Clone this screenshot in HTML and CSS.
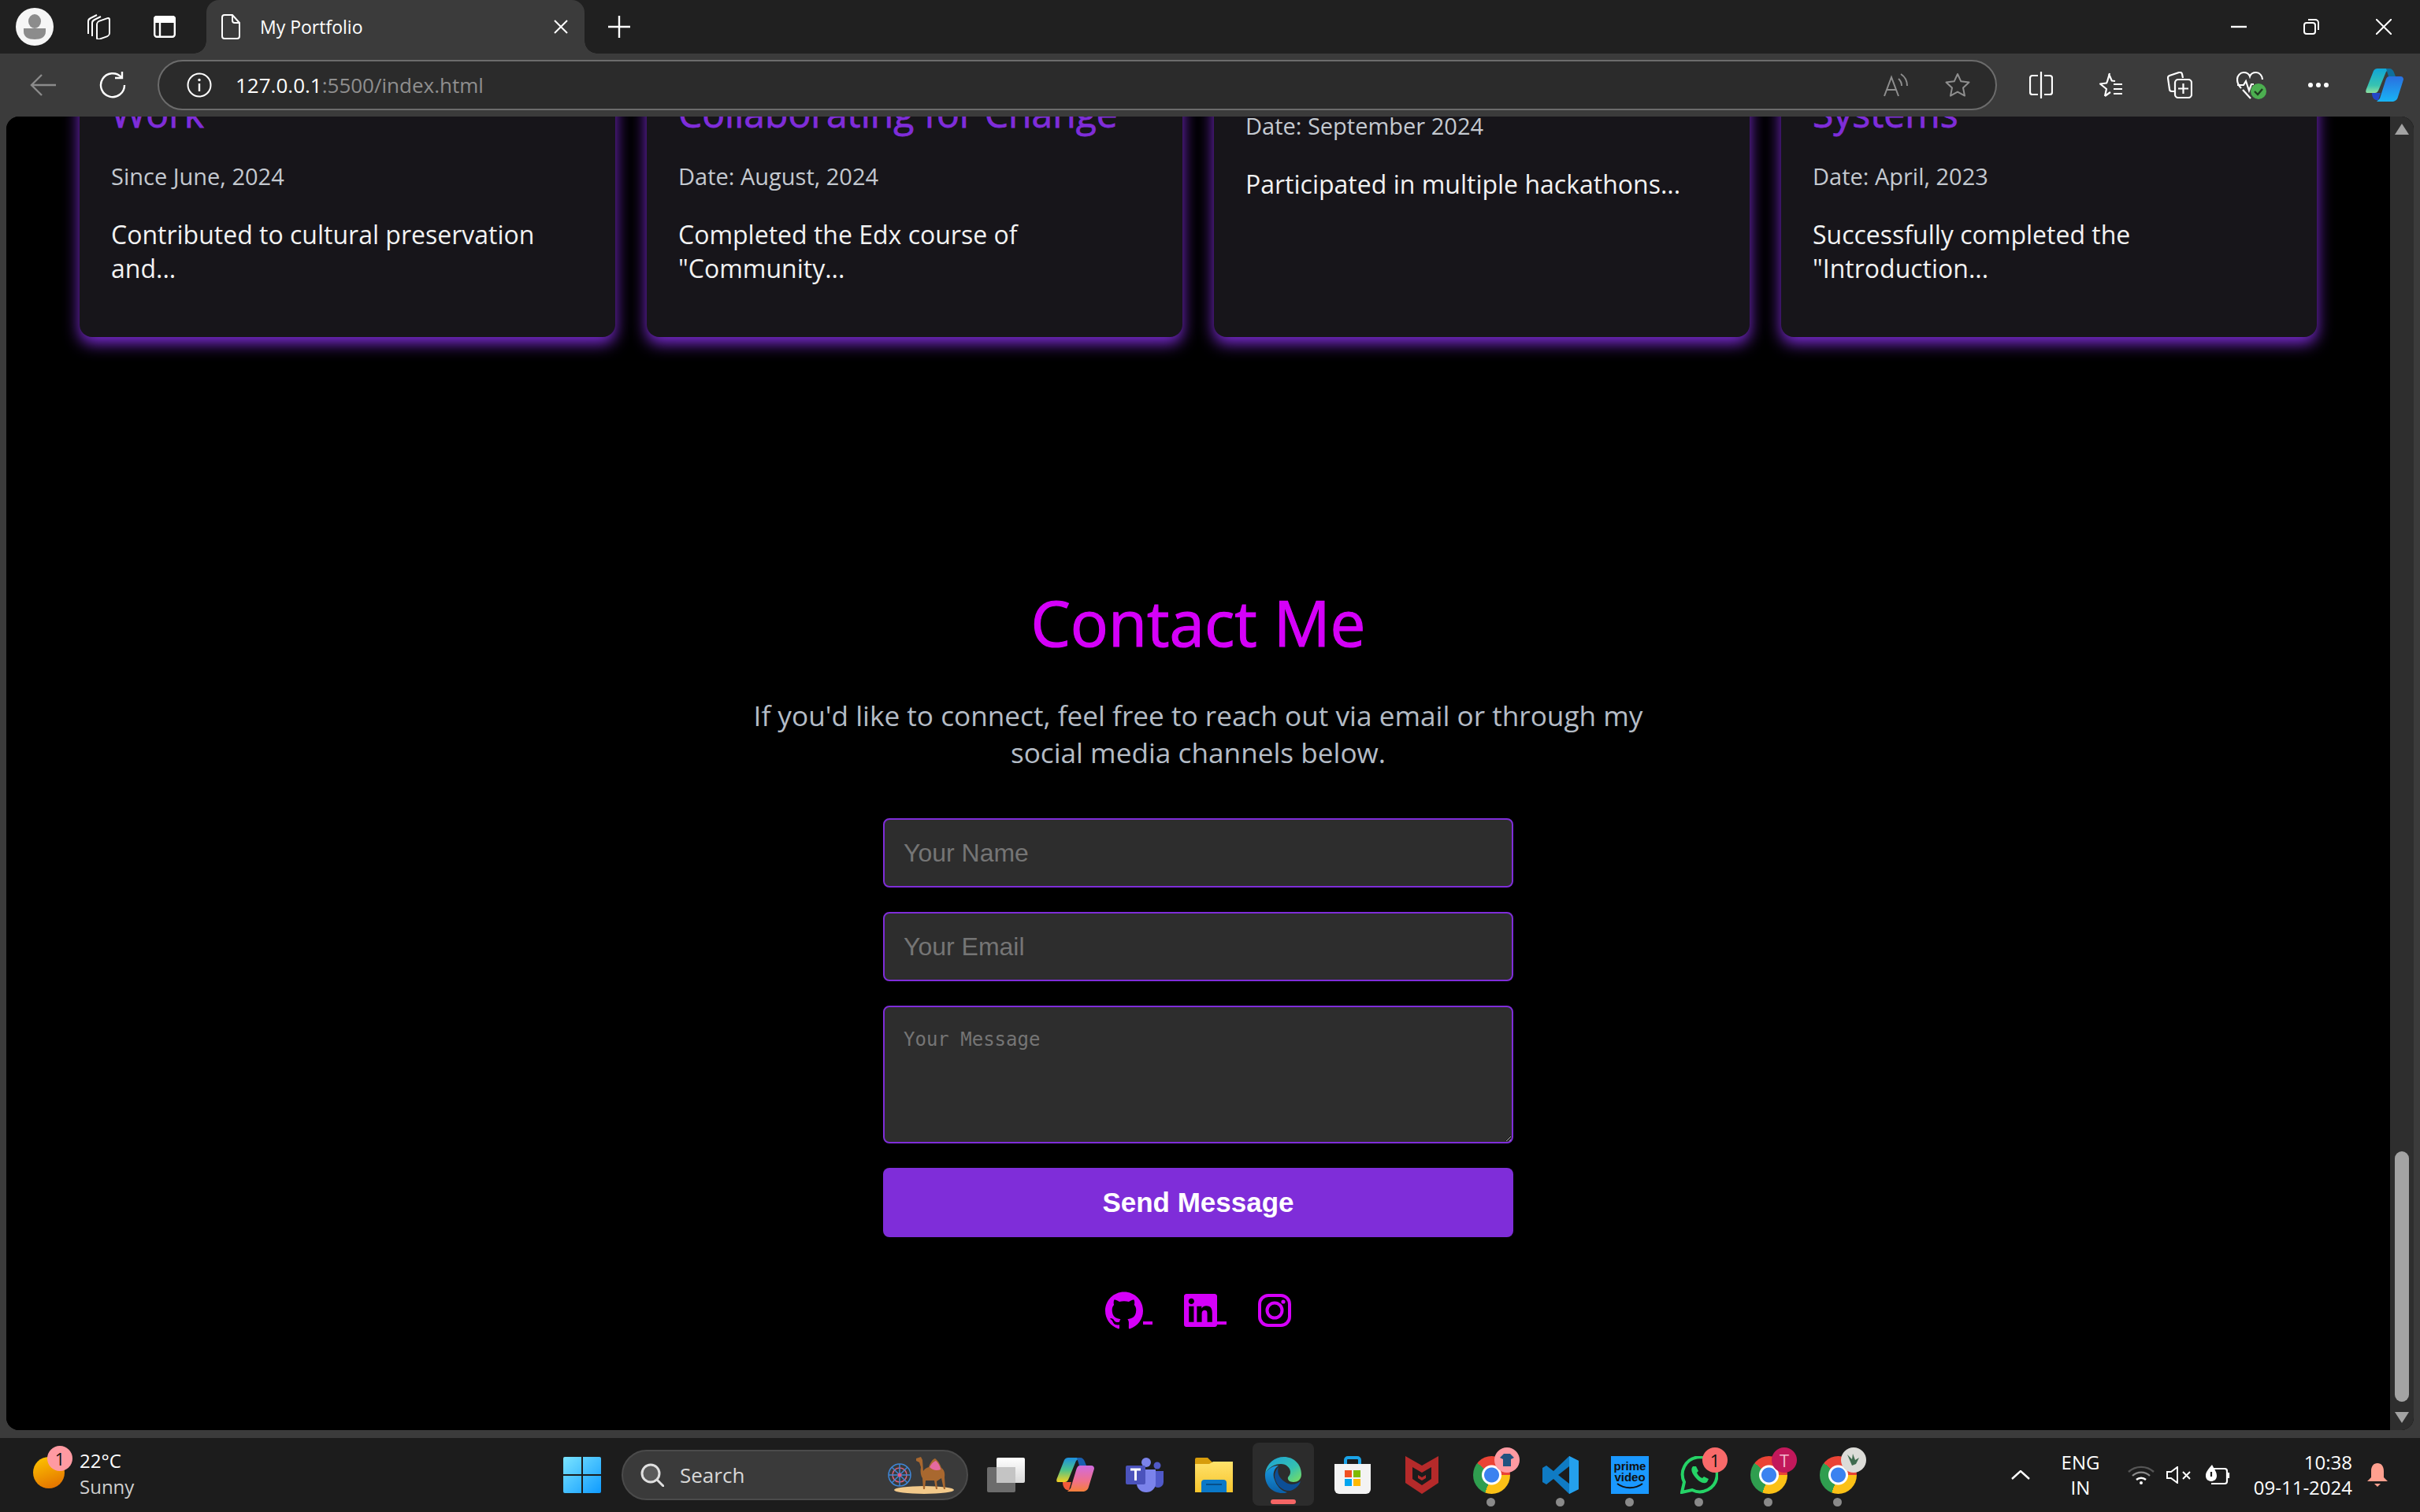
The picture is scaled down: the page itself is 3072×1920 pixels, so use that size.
FILE: index.html
```html
<!DOCTYPE html>
<html lang="en">
<head>
  <meta charset="UTF-8" />
  <title>My Portfolio</title>
  <link rel="stylesheet" href="styles.css">
</head>
<body>
  <!-- tab strip -->
  <div class="tabstrip">
    <svg class="profile" width="48" height="48" viewBox="0 0 48 48"><circle cx="24" cy="24" r="24" fill="#f6f6f6"/><ellipse cx="24" cy="17" rx="8" ry="9" fill="#8c8c8c"/><path d="M10 26h28v4c0 7-6 10-14 10s-14-3-14-10z" fill="#8c8c8c"/></svg>
    <svg class="workspaces" width="32" height="32" viewBox="0 0 32 32" fill="none" stroke="#fff" stroke-width="2"><path d="M3 25V9c0-2 1-3 3-4l8-4"/><path d="M8 28V11c0-2 1-3 3-4l8-4"/><rect x="14" y="7" width="16" height="23" rx="3" transform="skewY(-20) translate(0 8)"/></svg>
    <svg class="vtabs" width="28" height="28" viewBox="0 0 28 28"><path d="M4 0h20a4 4 0 0 1 4 4v5H0V4a4 4 0 0 1 4-4z" fill="#fff"/><rect x="1.200" y="1.200" width="25.600" height="25.600" rx="3" fill="none" stroke="#fff" stroke-width="2.400"/><path d="M8 8v19" stroke="#fff" stroke-width="2.400"/></svg>
    <div class="tab">
      <svg width="24" height="32" viewBox="0 0 24 32" fill="none" stroke="#fff" stroke-width="2"><path d="M4 1h10l9 10v17a3 3 0 0 1-3 3H4a3 3 0 0 1-3-3V4a3 3 0 0 1 3-3z"/><path d="M14 1v7a3 3 0 0 0 3 3h6"/></svg>
      <span class="tab-title">My Portfolio</span>
      <svg class="tab-close" width="18" height="18" viewBox="0 0 18 18" stroke="#fff" stroke-width="2"><path d="M1 1l16 16M17 1L1 17"/></svg>
    </div>
    <svg class="newtab" width="28" height="28" viewBox="0 0 28 28" stroke="#fff" stroke-width="2.400"><path d="M14 0v28M0 14h28"/></svg>
    <div class="winctrl">
      <svg width="20" height="4" viewBox="0 0 20 4"><path d="M0 2h20" stroke="#fff" stroke-width="2.400"/></svg>
      <svg width="20" height="20" viewBox="0 0 20 20" fill="none" stroke="#fff" stroke-width="2"><rect x="1" y="5" width="14" height="14" rx="3"/><path d="M6 1h9a4 4 0 0 1 4 4v9"/></svg>
      <svg width="20" height="20" viewBox="0 0 20 20" stroke="#fff" stroke-width="2"><path d="M0 0l20 20M20 0L0 20"/></svg>
    </div>
  </div>

  <!-- address bar row -->
  <div class="toolbar">
    <div class="slot"><svg width="34" height="28" viewBox="0 0 34 28" fill="none" stroke="#8b8b8b" stroke-width="2.400"><path d="M33 14H2M15 1L2 14l13 13"/></svg></div>
    <div class="slot"><svg width="34" height="34" viewBox="0 0 34 34" fill="none" stroke="#fff" stroke-width="2.400"><path d="M28 7a15 15 0 1 0 4 10"/><path d="M29 0v8h-9"/></svg></div>
    <div class="address">
      <svg width="32" height="32" viewBox="0 0 32 32" fill="none" stroke="#fff" stroke-width="2"><circle cx="16" cy="16" r="14.500"/><path d="M16 14v10" stroke-width="2.400"/><circle cx="16" cy="9.500" r="1.700" fill="#fff" stroke="none"/></svg>
      <div class="url"><span class="url-host">127.0.0.1</span>:5500/index.html</div>
      <svg class="read-aloud" width="32" height="30" viewBox="0 0 32 30" fill="none" stroke="#8f8f8f" stroke-width="2"><path d="M1 29L10 5l9 24M4 21h12"/><path d="M19 7a12 12 0 0 1 4 9M22 1a18 18 0 0 1 8 15"/></svg>
      <svg class="star" width="32" height="32" viewBox="0 0 32 32" fill="none" stroke="#8f8f8f" stroke-width="2" stroke-linejoin="round"><path d="M16 2l4.300 9.300 10.200 1.200-7.500 7 2 10.100-9-5-9 5 2-10.100-7.500-7 10.200-1.200z"/></svg>
    </div>
    <div class="slot first-tool"><svg width="30" height="34" viewBox="0 0 30 34" fill="none" stroke="#fff" stroke-width="2.200"><path d="M15 0v34"/><path d="M11 5H4a3 3 0 0 0-3 3v18a3 3 0 0 0 3 3h7M19 5h7a3 3 0 0 1 3 3v18a3 3 0 0 1-3 3h-7"/></svg></div>
    <div class="slot"><svg width="32" height="32" viewBox="0 0 32 32" fill="none" stroke="#fff" stroke-width="2.200" stroke-linejoin="round"><path d="M14 2l3.800 8.500 4.200.5M9 30l2-9-8-6.500 8-1 1-2 3-10.500M9 30l7-5"/><path d="M20 15h11M20 21h11M20 27h11"/></svg></div>
    <div class="slot"><svg width="32" height="34" viewBox="0 0 32 34" fill="none" stroke="#fff" stroke-width="2.200"><path d="M9 25H6a3 3 0 0 1-3-3L1 8a3 3 0 0 1 2-3l12-4a3 3 0 0 1 4 2l1 5"/><rect x="10" y="10" width="21" height="23" rx="4"/><path d="M20.500 15v13M14 21.500h13"/></svg></div>
    <div class="slot health-slot"><svg width="38" height="36" viewBox="0 0 38 36" fill="none" stroke="#fff" stroke-width="2.200"><path d="M6 22C3 19 1 16 1 11c0-5 4-9 8-9 4 0 7 2 8 5 1-3 4-5 8-5 4 0 8 4 8 9"/><path d="M1 18h8l3-5 4 12 3-8h3M8 24l10 11"/><circle cx="28" cy="26" r="10" fill="#4caf50" stroke="none"/><path d="M23 26l4 4 6-7" stroke="#1f3d20" stroke-width="2.400"/></svg></div>
    <div class="slot dots-slot"><span class="dot"></span><span class="dot"></span><span class="dot"></span></div>
    <div class="copilot"><svg width="48" height="42" viewBox="0 0 48 42"><defs><linearGradient id="cpA" x1="0" y1="0" x2="0" y2="1"><stop offset="0" stop-color="#0fa5d8"/><stop offset=".7" stop-color="#38c4b0"/><stop offset="1" stop-color="#8fe0a0"/></linearGradient><linearGradient id="cpB" x1="0" y1="0" x2="0" y2="1"><stop offset="0" stop-color="#2a6fe0"/><stop offset="1" stop-color="#18b4f5"/></linearGradient></defs><path d="M10 3c1-2 3-3 5-3h16l-5 4-9 22c-1 2-2 5-5 5H2C0 31 0 29 .5 27z" fill="url(#cpA)"/><path d="M26 0h4c3 0 5 2 6 5l2 5h-9z" fill="#0f6f9c"/><path d="M30 10h14c3 0 4 2 4 4l-7 22c-1 4-4 6-8 6H14l4-4 7-22c1-3 2-6 5-6z" fill="url(#cpB)"/><path d="M8 31h11l-3 9c-5 1-8-3-8-9z" fill="#2447c8"/></svg></div>
  </div>

  <!-- page area inside the window -->
  <div class="frame">
    <div class="viewport">
      <main class="page">
        <section class="cards">
          <article class="card">
            <h3 class="card-title">Work</h3>
            <p class="card-date">Since June, 2024</p>
            <p class="card-text">Contributed to cultural preservation and...</p>
          </article>
          <article class="card">
            <h3 class="card-title">Collaborating for Change</h3>
            <p class="card-date">Date: August, 2024</p>
            <p class="card-text">Completed the Edx course of "Community...</p>
          </article>
          <article class="card">
            <p class="card-date">Date: September 2024</p>
            <p class="card-text">Participated in multiple hackathons...</p>
          </article>
          <article class="card">
            <h3 class="card-title">Systems</h3>
            <p class="card-date">Date: April, 2023</p>
            <p class="card-text">Successfully completed the "Introduction...</p>
          </article>
        </section>

        <section class="contact">
          <h2 class="contact-title">Contact Me</h2>
          <p class="contact-text">If you'd like to connect, feel free to reach out via email or through my social media channels below.</p>
          <form class="contact-form">
            <input class="field" type="text" placeholder="Your Name">
            <input class="field" type="email" placeholder="Your Email">
            <textarea class="field field-area" placeholder="Your Message"></textarea>
            <button class="send" type="button">Send Message</button>
          </form>
          <div class="socials"><a class="social" href="#"><svg class="icon-gh" viewBox="0 0 24 24" fill="currentColor"><path d="M12 .297c-6.630 0-12 5.373-12 12 0 5.303 3.438 9.800 8.205 11.385.6.113.820-.258.820-.577 0-.285-.010-1.040-.015-2.040-3.338.724-4.042-1.610-4.042-1.610C4.422 18.070 3.633 17.700 3.633 17.700c-1.087-.744.084-.729.084-.729 1.205.084 1.838 1.236 1.838 1.236 1.070 1.835 2.809 1.305 3.495.998.108-.776.417-1.305.760-1.605-2.665-.300-5.466-1.332-5.466-5.930 0-1.310.465-2.380 1.235-3.220-.135-.303-.540-1.523.105-3.176 0 0 1.005-.322 3.300 1.230.960-.267 1.980-.399 3-.405 1.020.006 2.040.138 3 .405 2.280-1.552 3.285-1.230 3.285-1.230.645 1.653.240 2.873.120 3.176.765.840 1.230 1.910 1.230 3.220 0 4.610-2.805 5.625-5.475 5.920.420.360.810 1.096.810 2.220 0 1.606-.015 2.896-.015 3.286 0 .315.210.690.825.570C20.565 22.092 24 17.592 24 12.297c0-6.627-5.373-12-12-12"/></svg> </a><a class="social" href="#"><svg class="icon-sq" viewBox="0 0 24 24" fill="currentColor"><path d="M20.447 20.452h-3.554v-5.569c0-1.328-.027-3.037-1.852-3.037-1.853 0-2.136 1.445-2.136 2.939v5.667H9.351V9h3.414v1.561h.046c.477-.9 1.637-1.850 3.370-1.850 3.601 0 4.267 2.370 4.267 5.455v6.286zM5.337 7.433c-1.144 0-2.063-.926-2.063-2.065 0-1.138.920-2.063 2.063-2.063 1.140 0 2.064.925 2.064 2.063 0 1.139-.925 2.065-2.064 2.065zm1.782 13.019H3.555V9h3.564v11.452zM22.225 0H1.771C.792 0 0 .774 0 1.729v20.542C0 23.227.792 24 1.771 24h20.451C23.200 24 24 23.227 24 22.271V1.729C24 .774 23.200 0 22.222 0h.003z"/></svg> </a><a class="social" href="#"><svg class="icon-sq" viewBox="0 0 42 42" fill="none" stroke="currentColor" stroke-width="4"><rect x="2" y="2" width="38" height="38" rx="11"/><circle cx="21" cy="21" r="9.500"/><circle cx="32" cy="10" r="2.600" fill="currentColor" stroke="none"/></svg></a></div>
        </section>
      </main>
      <div class="scrollbar">
        <span class="arrow arrow-up"></span>
        <span class="thumb"></span>
        <span class="arrow arrow-down"></span>
      </div>
    </div>
  </div>

  <!-- windows taskbar -->
  <footer class="taskbar">
    <div class="weather">
      <span class="sun"></span>
      <span class="badge badge-pink">1</span>
      <div class="weather-text">
        <div class="temp">22°C</div>
        <div class="cond">Sunny</div>
      </div>
    </div>
    <div class="task">
      <svg width="48" height="46" viewBox="0 0 48 46"><defs><linearGradient id="winG" x1="0" y1="0" x2="1" y2="1"><stop offset="0" stop-color="#7ae4ff"/><stop offset="1" stop-color="#0f9bff"/></linearGradient></defs><path d="M2 0h21v22H0V2a2 2 0 0 1 2-2zM25 0h21a2 2 0 0 1 2 2v20H25zM0 24h23v22H2a2 2 0 0 1-2-2zM25 24h23v20a2 2 0 0 1-2 2H25z" fill="url(#winG)"/></svg>
    </div>
    <div class="search">
      <svg width="30" height="30" viewBox="0 0 30 30" fill="none" stroke="#e0e0e0" stroke-width="3"><circle cx="13" cy="13" r="11" fill="#5a5a5a"/><path d="M21 21l8 8" stroke-linecap="round"/></svg>
      <span class="search-label">Search</span>
      <svg class="camel" width="84" height="48" viewBox="0 0 84 48"><ellipse cx="46" cy="43" rx="38" ry="5" fill="#f2c98a"/><g fill="none" stroke="#3f86d6" stroke-width="1.500"><circle cx="15" cy="24" r="14"/><circle cx="15" cy="24" r="9" stroke="#d9607f"/><path d="M15 10v28M1 24h28M5 14l20 20M25 14L5 34"/></g><circle cx="15" cy="24" r="2.500" fill="#e2567f"/><path d="M36 3l6-2 2 4 1 14c2-3 4-4 7-5 2-6 5-10 8-11 3 2 6 6 8 12 3 2 5 6 4 12l1 15h-2l-3-14-6 4 1 10h-2l-2-11H48l-1 11h-2l-1-14c-2-3-3-8-2-14L40 8l-4-2z" fill="#a9682f"/><path d="M53 14c3-5 5-7 8-8 2 2 5 5 6 11-5 2-10 1-14-3z" fill="#e56aa0"/></svg>
    </div>
    <div class="task task-first">
      <svg width="48" height="44" viewBox="0 0 48 44"><defs><linearGradient id="tvG" x1="0" y1="0" x2="0" y2="1"><stop offset="0" stop-color="#ffffff"/><stop offset="1" stop-color="#d8d8d8"/></linearGradient></defs><rect x="12" width="36" height="32" rx="2" fill="url(#tvG)"/><rect y="12" width="36" height="32" rx="2" fill="#7a7a7a" fill-opacity=".85"/><rect x="12" y="12" width="24" height="20" fill="#c4c4c4"/></svg>
    </div>
    <div class="task">
      <svg width="48" height="44" viewBox="0 0 48 44"><defs><linearGradient id="cp2A" x1="0" y1="0" x2="0" y2="1"><stop offset="0" stop-color="#1c8fe0"/><stop offset=".5" stop-color="#4cc38a"/><stop offset="1" stop-color="#f5d020"/></linearGradient><linearGradient id="cp2B" x1="0" y1="0" x2="0" y2="1"><stop offset="0" stop-color="#d06be0"/><stop offset=".6" stop-color="#f0708a"/><stop offset="1" stop-color="#f5803a"/></linearGradient></defs><path d="M10 3c1-2 3-3 5-3h15l-5 4-9 22c-1 2-2 5-5 5H2C0 31 0 29 .5 27z" fill="url(#cp2A)"/><path d="M26 0h4c3 0 5 2 6 5l2 5h-9z" fill="#1a5fb0"/><path d="M30 10h14c3 0 4 2 4 4l-7 23c-1 4-4 6-8 6H14l4-4 7-23c1-3 2-6 5-6z" fill="url(#cp2B)"/><path d="M8 31h11l-3 10c-5 1-8-4-8-10z" fill="#f25a3a"/></svg>
    </div>
    <div class="task">
      <svg width="48" height="44" viewBox="0 0 48 44"><circle cx="26" cy="6" r="6" fill="#7b83eb"/><circle cx="40" cy="10" r="4.500" fill="#5059c9"/><path d="M34 17h14v14a7 7 0 0 1-14 0z" fill="#5059c9"/><path d="M14 15h24v18a12 11 0 0 1-24 0z" fill="#7b83eb"/><rect y="10" width="25" height="24" rx="2" fill="#4b53bc"/><path d="M6 15h13M12.500 15v14" stroke="#fff" stroke-width="3"/></svg>
    </div>
    <div class="task">
      <svg width="48" height="44" viewBox="0 0 48 44"><defs><linearGradient id="fdG" x1="0" y1="0" x2="0" y2="1"><stop offset="0" stop-color="#ffe26b"/><stop offset="1" stop-color="#f7c52c"/></linearGradient></defs><path d="M0 2a2 2 0 0 1 2-2h14l6 6h26v6H0z" fill="#d79c0b"/><path d="M0 8h18l5-3h25v39H0z" fill="url(#fdG)"/><path d="M8 44V32a4 4 0 0 1 4-4h24a4 4 0 0 1 4 4v12z" fill="#0a78c8"/><path d="M14 34h20" stroke="#064f8a" stroke-width="2"/></svg>
    </div>
    <div class="task task-active">
      <svg width="48" height="48" viewBox="0 0 48 48"><defs><linearGradient id="egA" x1="0" y1="0" x2="1" y2="1"><stop offset="0" stop-color="#1a9fd8"/><stop offset=".6" stop-color="#35c1b0"/><stop offset="1" stop-color="#7fe05a"/></linearGradient><linearGradient id="egB" x1="0" y1="0" x2="0" y2="1"><stop offset="0" stop-color="#1a9be0"/><stop offset="1" stop-color="#0b5fa8"/></linearGradient></defs><path d="M1 22C3 9 13 1 25 1c12 0 22 9 22 22 0 7-5 10-10 10-5 0-8-3-7-6 1-2 3-3 3-7 0-5-5-10-12-10C13 10 6 14 1 22z" fill="url(#egA)"/><path d="M1 22C5 16 11 12 18 12c-6 4-8 11-5 18 2 7 8 14 16 16-2 1-4 1-6 1C10 47 0 37 1 22z" fill="url(#egB)"/><path d="M18 14c-4 4-6 10-4 16 2 8 10 15 19 14 6-2 11-6 13-12-5 4-12 5-18 2-7-4-13-11-10-20z" fill="#0d4f96"/></svg>
      <span class="active-bar"></span>
    </div>
    <div class="task">
      <svg width="46" height="48" viewBox="0 0 46 48"><path d="M14 12V5a3 3 0 0 1 3-3h12a3 3 0 0 1 3 3v7" fill="none" stroke="#1aa3e8" stroke-width="4"/><path d="M0 10h46v32a6 6 0 0 1-6 6H6a6 6 0 0 1-6-6z" fill="#f3f3f3"/><rect x="13" y="18" width="9" height="9" fill="#f25022"/><rect x="24" y="18" width="9" height="9" fill="#7fba00"/><rect x="13" y="29" width="9" height="9" fill="#00a4ef"/><rect x="24" y="29" width="9" height="9" fill="#ffb900"/></svg>
    </div>
    <div class="task">
      <svg width="42" height="48" viewBox="0 0 42 48"><path d="M0 0l21 12L42 0v34L21 48 0 34z" fill="#b52a2a"/><path d="M9 14l12 7 12-7v15l-12 8-12-8z" fill="#1c1c1c"/><path d="M21 27l-5-3v4l5 3 5-3v-4z" fill="#b52a2a"/></svg>
    </div>
    <div class="task task-open">
      <span class="chrome"></span>
      <span class="badge badge-pink badge-app">
        <svg width="18" height="18" viewBox="0 0 18 18"><path d="M5 1h8l5 5-4 2v9H4V8L0 6z" fill="#21527f"/></svg>
      </span>
    </div>
    <div class="task task-open">
      <svg width="46" height="48" viewBox="0 0 46 48"><path d="M34 0l12 6v36l-12 6-20-19-9 7-5-3V15l5-3 9 7z" fill="#0f7bc4"/><path d="M34 0l12 6v36l-12 6z" fill="#24a0ed"/><path d="M34 13L20 24l14 11z" fill="#1c1c1c"/></svg>
    </div>
    <div class="task task-open">
      <div class="prime"><span>prime</span><span>video</span><svg width="34" height="10" viewBox="0 0 34 10" fill="none" stroke="#111" stroke-width="2"><path d="M1 1c9 7 23 7 32 0"/></svg></div>
    </div>
    <div class="task task-open">
      <svg width="48" height="48" viewBox="0 0 48 48"><path d="M2 46l3-13A22 22 0 1 1 15 43z" fill="none" stroke="#25d366" stroke-width="4"/><path d="M16 13c-3 3-2 8 3 14s11 9 15 6l2-4-6-3-2 2c-3-1-6-4-7-7l2-2-3-6z" fill="#25d366"/></svg>
      <span class="badge badge-red">1</span>
    </div>
    <div class="task task-open">
      <span class="chrome"></span>
      <span class="badge badge-berry">T</span>
    </div>
    <div class="task task-open">
      <span class="chrome"></span>
      <span class="badge badge-grey"><svg width="20" height="20" viewBox="0 0 20 20"><path d="M2 3l6 6 1-7 3 8 5-3-4 8-5 2z" fill="#3f6b4f"/></svg></span>
    </div>
    <div class="tray">
      <svg class="chevron" width="24" height="12" viewBox="0 0 24 12" fill="none" stroke="#fff" stroke-width="2.400"><path d="M1 11L12 1l11 10"/></svg>
      <div class="lang"><div>ENG</div><div>IN</div></div>
      <svg class="wifi" width="34" height="24" viewBox="0 0 34 24" fill="none" stroke="#555" stroke-width="2.400"><path d="M1 8a24 24 0 0 1 32 0"/><path d="M6 13a16 16 0 0 1 22 0" stroke="#8a8a8a"/><path d="M11 18a9 9 0 0 1 12 0" stroke="#fff"/><circle cx="17" cy="22" r="2" fill="#fff" stroke="none"/></svg>
      <svg class="vol" width="32" height="22" viewBox="0 0 32 22" fill="none" stroke="#fff" stroke-width="2"><path d="M1 7h5l8-6v20l-8-6H1z"/><path d="M21 7l9 9M30 7l-9 9"/></svg>
      <svg class="batt" width="32" height="28" viewBox="0 0 32 28" fill="none" stroke="#fff" stroke-width="2.200"><path d="M7 6h18a3 3 0 0 1 3 3v13a3 3 0 0 1-3 3H8M30 11v7"/><path d="M9 1c-5 6-8 9-8 14 0 5 4 7 7 7s7-2 7-7c0-5-3-8-6-14z" fill="#fff" stroke="none"/><path d="M8 10v6" stroke="#1c1c1c"/></svg>
      <div class="clock"><div>10:38</div><div>09-11-2024</div></div>
      <svg class="bell" width="28" height="30" viewBox="0 0 28 30"><path d="M14 0c5 0 8 4 8 10v8l5 5H1l5-5v-8c0-6 3-10 8-10z" fill="#ffa08f"/><path d="M10 26h8l-4 4z" fill="#ffa08f"/></svg>
    </div>
  </footer>
</body>
</html>
```

FILE: styles.css
```css
* {
  box-sizing: border-box;
}
html, body {
  margin: 0;
  height: 100%;
  overflow: hidden;
}
body {
  width: 3072px;
  height: 1920px;
  display: flex;
  flex-direction: column;
  background: #3b3b3b;
  font-family: "Open Sans", sans-serif;
  color: #fff;
}
svg {
  display: block;
  flex: none;
}

/* tab strip */
.tabstrip {
  height: 68px;
  flex: none;
  display: flex;
  align-items: center;
  background: #202020;
}
.profile {
  margin-left: 20px;
}
.workspaces {
  margin-left: 41px;
}
.vtabs {
  margin-left: 54px;
}
.tab {
  width: 480px;
  height: 68px;
  margin-left: 39px;
  padding: 0 21px 0 19px;
  display: flex;
  align-items: center;
  position: relative;
  background: #3b3b3b;
  border-radius: 16px 16px 0 0;
}
/* the curved feet of the active tab */
.tab::before,
.tab::after {
  content: "";
  position: absolute;
  bottom: 0;
  width: 16px;
  height: 16px;
}
.tab::before {
  left: -16px;
  background: radial-gradient(circle at 0 0, transparent 15.500px, #3b3b3b 16px);
}
.tab::after {
  right: -16px;
  background: radial-gradient(circle at 100% 0, transparent 15.500px, #3b3b3b 16px);
}
.tab-title {
  margin-left: 25px;
  font-size: 23px;
  flex: 1;
}
.newtab {
  margin-left: 30px;
}
.winctrl {
  margin-left: auto;
  margin-right: 36px;
  display: flex;
  align-items: center;
  gap: 72px;
}

/* toolbar */
.toolbar {
  height: 80px;
  flex: none;
  display: flex;
  align-items: center;
  padding-left: 11px;
  background: #3b3b3b;
}
.slot {
  width: 88px;
  height: 64px;
  flex: none;
  display: flex;
  align-items: center;
  justify-content: center;
}
.address {
  width: 2335px;
  height: 64px;
  margin-left: 13px;
  padding: 0 32px 0 35px;
  display: flex;
  align-items: center;
  flex: none;
  background: #2b2b2b;
  border: 2px solid #6c6c6c;
  border-radius: 32px;
}
.url {
  margin-left: 30px;
  font-size: 26px;
  color: #8f8f8f;
  flex: 1;
}
.url-host {
  color: #fff;
}
.star {
  margin-left: 46px;
}
.first-tool {
  margin-left: 12px;
}
.health-slot {
  padding-left: 6px;
}
.dots-slot {
  gap: 4px;
}
.dot {
  width: 6px;
  height: 6px;
  border-radius: 50%;
  background: #fff;
}
.copilot {
  margin-left: 16px;
}

/* window frame round the page */
.frame {
  flex: 1;
  min-height: 0;
  padding: 0 8px 10px 8px;
}
.viewport {
  height: 100%;
  display: flex;
  overflow: hidden;
  border-radius: 16px;
  background: #000;
}
.page {
  flex: 1;
  min-width: 0;
  padding: 0 93px;
  overflow: hidden;
  background: #000;
}
.scrollbar {
  width: 30px;
  flex: none;
  padding: 9px 6px;
  display: flex;
  flex-direction: column;
  align-items: center;
  background: #2e2e2e;
}
.thumb {
  width: 18px;
  height: 318px;
  margin-top: auto;
  border-radius: 9px;
  background: #a3a3a3;
}
.arrow {
  width: 0;
  height: 0;
  border-left: 9px solid transparent;
  border-right: 9px solid transparent;
}
.arrow-up {
  border-bottom: 14px solid #a3a3a3;
}
.arrow-down {
  margin-top: 13px;
  border-top: 14px solid #a3a3a3;
}

/* cards, scrolled past their titles */
.cards {
  display: grid;
  grid-template-columns: repeat(4, 680px);
  gap: 40px;
  margin-top: -36px;
}
.card {
  height: 316px;
  padding: 0 40px;
  background: #17151a;
  border-radius: 0 0 16px 16px;
  box-shadow: 0 8px 20px #7f2dd9;
}
.card-title {
  margin: 0;
  font-size: 48px;
  line-height: 64px;
  font-weight: 400;
  -webkit-text-stroke: 0.8px #7f2dd9;
  color: #7f2dd9;
}
.card-date {
  margin: 26px 0 0;
  font-size: 29px;
  line-height: 44px;
  color: #c4c9d0;
}
.card-text {
  margin: 30px 0 0;
  font-size: 32px;
  line-height: 43px;
  color: #f2f2f2;
}

/* contact */
.contact {
  display: flex;
  flex-direction: column;
  align-items: center;
  margin-top: 307px;
}
.contact-title {
  margin: 0;
  font-size: 80px;
  line-height: 110px;
  font-weight: 400;
  -webkit-text-stroke: 1.2px #d500f9;
  color: #d500f9;
}
.contact-text {
  width: 1200px;
  margin: 40px 0 0;
  font-size: 35.200px;
  line-height: 47px;
  text-align: center;
  color: #b4bcc6;
}
.contact-form {
  width: 800px;
  margin-top: 60px;
  display: flex;
  flex-direction: column;
  gap: 31px;
}
.field {
  display: block;
  width: 100%;
  height: 88px;
  padding: 0 24px;
  font-family: "Liberation Sans", sans-serif;
  font-size: 32px;
  color: #fff;
  background: #2d2d2d;
  border: 2px solid #7f2dd9;
  border-radius: 8px;
  outline: none;
}
.field-area {
  height: 175px;
  padding: 27px 24px;
  font-family: "DejaVu Sans Mono", monospace;
  font-size: 24px;
  resize: vertical;
}
.send {
  height: 88px;
  font-family: "Liberation Sans", sans-serif;
  font-size: 35px;
  font-weight: 700;
  color: #fff;
  background: #7f2dd9;
  border: 0;
  border-radius: 8px;
}
.socials {
  margin-top: 63px;
  font-size: 46px;
  line-height: 48px;
  text-align: center;
  color: #d500f9;
}
.social {
  margin: 0 20px;
  color: #d500f9;
  text-decoration: underline;
  text-decoration-thickness: 4px;
}
.social svg {
  display: inline-block;
  vertical-align: middle;
}
.icon-gh {
  width: 48px;
  height: 48px;
}
.icon-sq {
  width: 42px;
  height: 42px;
}

/* taskbar */
.taskbar {
  height: 94px;
  flex: none;
  display: flex;
  align-items: center;
  background: #1c1c1c;
  font-size: 24px;
}
.weather {
  width: 695px;
  height: 94px;
  flex: none;
  position: relative;
  padding-left: 101px;
  padding-bottom: 5px;
  display: flex;
  align-items: center;
}
.sun {
  position: absolute;
  left: 42px;
  top: 24px;
  width: 40px;
  height: 40px;
  border-radius: 50%;
  background: linear-gradient(160deg, #ffc800, #e06a00);
}
.weather .badge {
  left: 60px;
  top: 10px;
}
.weather-text {
  line-height: 33px;
}
.cond {
  color: #cfcfcf;
}
.task {
  width: 88px;
  height: 94px;
  flex: none;
  position: relative;
  display: flex;
  align-items: center;
  justify-content: center;
}
.task-first {
  margin-left: 4px;
}
.task-active::before {
  content: "";
  position: absolute;
  left: 5px;
  right: 5px;
  top: 6px;
  bottom: 8px;
  background: #2c2c2c;
  border-radius: 8px;
}
.task-active svg {
  position: relative;
}
.active-bar {
  position: absolute;
  left: 28px;
  bottom: 10px;
  width: 32px;
  height: 6px;
  border-radius: 3px;
  background: #f56565;
}
.task-open::after {
  content: "";
  position: absolute;
  left: 38px;
  bottom: 7px;
  width: 11px;
  height: 11px;
  border-radius: 50%;
  background: #8a8a8a;
}
.search {
  width: 440px;
  height: 64px;
  margin-left: 6px;
  padding: 0 16px 0 22px;
  display: flex;
  align-items: center;
  flex: none;
  background: #3a3a3a;
  border: 2px solid #4b4b4b;
  border-radius: 32px;
}
.search-label {
  margin-left: 20px;
  flex: 1;
  font-size: 26px;
  color: #d8d8d8;
}
.chrome {
  width: 47px;
  height: 48px;
  border-radius: 50%;
  background:
    radial-gradient(circle, #3b82f0 0 9px, #fff 10px 12px, transparent 13px),
    conic-gradient(#ea4335 0 90deg, #fbc116 90deg 200deg, #2f9e4f 200deg 310deg, #ea4335 310deg);
}
.badge {
  position: absolute;
  width: 32px;
  height: 32px;
  display: flex;
  align-items: center;
  justify-content: center;
  border-radius: 50%;
  font-size: 22px;
  color: #111;
}
.task .badge {
  left: 48px;
  top: 12px;
}
.badge-pink {
  background: #ff9aa2;
}
.badge-red {
  background: #f96a6a;
}
.badge-berry {
  background: #c2185b;
  color: #f3b6cc;
}
.badge-grey {
  background: #dcdcd8;
}
.prime {
  width: 48px;
  height: 48px;
  display: flex;
  flex-direction: column;
  align-items: center;
  background: #1a98ff;
  font-family: "Liberation Sans", sans-serif;
  font-size: 15px;
  font-weight: 700;
  line-height: 14px;
  color: #111;
  padding-top: 6px;
}
.tray {
  margin-left: 176px;
  display: flex;
  align-items: center;
  flex: none;
}
.lang {
  width: 70px;
  margin-left: 29px;
  text-align: center;
  line-height: 32px;
}
.wifi {
  margin-left: 25px;
}
.vol {
  margin-left: 15px;
}
.batt {
  margin-left: 17px;
}
.clock {
  width: 150px;
  margin-left: 5px;
  text-align: right;
  line-height: 32px;
}
.bell {
  margin-left: 18px;
}
```
